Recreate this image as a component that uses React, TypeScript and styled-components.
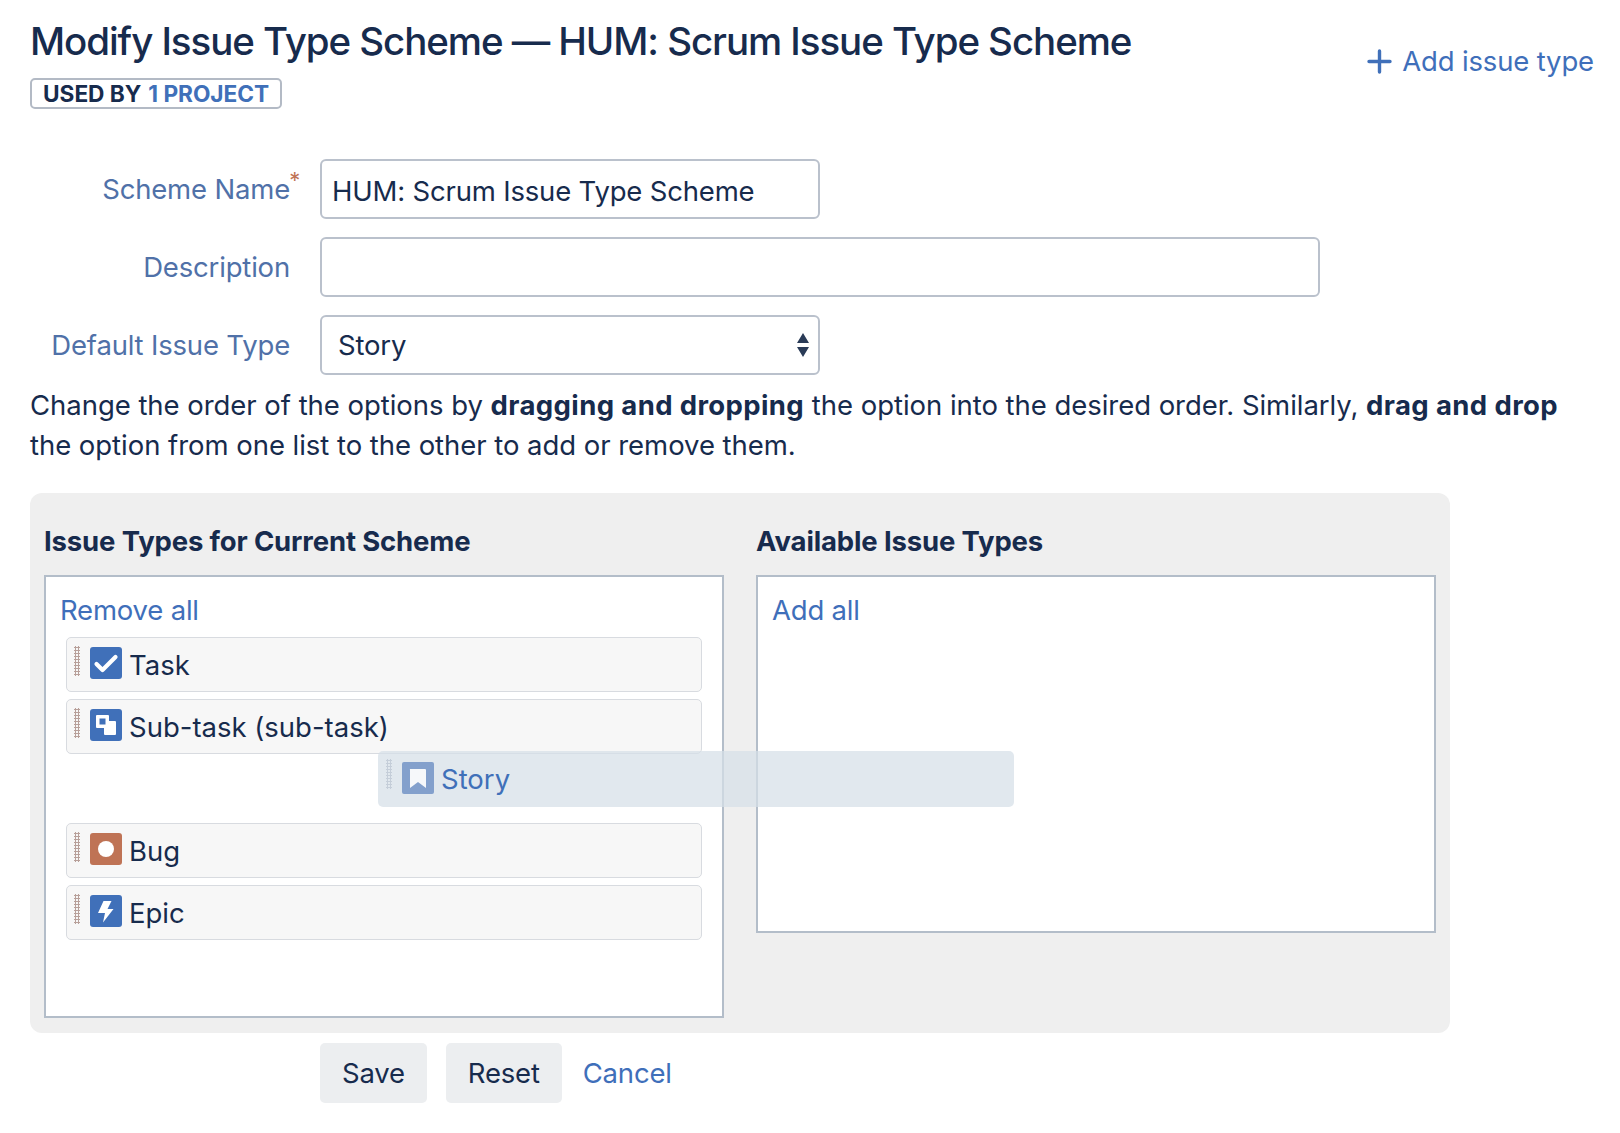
import {FC} from 'react';
import styled, {createGlobalStyle} from 'styled-components';

const GlobalStyle = createGlobalStyle`
  html, body {
    margin: 0;
    padding: 0;
    background: #fff;
  }
  body {
    font-family: Inter, "Liberation Sans", sans-serif;
    font-size: 27.5px;
    line-height: 40px;
    letter-spacing: -0.04px;
    color: #172b4d;
  }
`;

const Page = styled.div`
  width: 1620px;
  height: 1133px;
  box-sizing: border-box;
  padding: 0 30px;
  position: relative;
  overflow: hidden;
`;

const Header = styled.header`
  display: flex;
  justify-content: space-between;
  align-items: flex-start;
  padding-top: 17px;
`;

const Title = styled.h1`
  margin: 0;
  font-size: 38.5px;
  line-height: 48px;
  font-weight: 500;
  letter-spacing: -1.07px;
  color: #172b4d;
`;

const Badge = styled.div`
  display: inline-flex;
  align-items: center;
  gap: 7px;
  height: 31px;
  margin-top: 13px;
  padding: 0 11px;
  border: 2px solid #b3bac5;
  border-radius: 5px;
  font-size: 22.7px;
  font-weight: 700;
  line-height: 27px;
  color: #172b4d;
  box-sizing: border-box;
`;

const BadgeAccent = styled.span`
  color: #4070b9;
`;

const AddType = styled.a`
  display: flex;
  align-items: center;
  gap: 10px;
  margin: 24px -4px 0 0;
  letter-spacing: -0.15px;
  color: #3f6fba;
  white-space: nowrap;
`;

const Form = styled.form`
  display: grid;
  grid-template-columns: 260px 1fr;
  column-gap: 30px;
  row-gap: 18px;
  margin-top: 46.5px;
  letter-spacing: -0.18px;
`;

const Label = styled.label`
  text-align: right;
  line-height: 60px;
  color: #5071a8;
  position: relative;
`;

const Required = styled.span`
  position: absolute;
  right: -10px;
  top: -9px;
  color: #bf7355;
  font-size: 22px;
`;

const Field = styled.div<{$width: number}>`
  width: ${p => p.$width}px;
  height: 60px;
  box-sizing: border-box;
  display: flex;
  align-items: center;
  justify-content: space-between;
  padding: 4px 10px 0;
  border: 2px solid #bac1cc;
  border-radius: 6px;
  color: #172b4d;
`;

const SelectField = styled(Field)`
  padding: 0 8px 0 16px;
`;

const Help = styled.p`
  margin: 10px 0 0;
  width: 1570px;

  strong {
    font-weight: 700;
    letter-spacing: 0.38px;
  }
`;

const Panel = styled.section`
  display: grid;
  grid-template-columns: 680px 680px;
  column-gap: 32px;
  align-items: start;
  width: 1420px;
  height: 540px;
  box-sizing: border-box;
  margin-top: 28.5px;
  padding: 27px 14px 14px;
  background: #efefef;
  border-radius: 12px;
`;

const ColumnTitle = styled.h3`
  margin: 0 0 13px;
  font-size: 27.5px;
  line-height: 42px;
  font-weight: 700;
  letter-spacing: -0.15px;
`;

const List = styled.div<{$height: number}>`
  height: ${p => p.$height}px;
  box-sizing: border-box;
  padding: 13px 20px 0 14px;
  background: #fff;
  border: 2px solid #b3bdc9;
`;

const ListAction = styled.a`
  display: block;
  color: #3f6fba;
  line-height: 40px;
  margin-bottom: 7px;
  letter-spacing: -0.2px;
`;

const Item = styled.div`
  display: flex;
  align-items: center;
  height: 55px;
  box-sizing: border-box;
  margin: 0 0 7px 6px;
  padding: 0 7px;
  background: #f7f7f7;
  border: 1.5px solid #d8dbe0;
  border-radius: 5px;
`;

const Gap = styled.div`
  height: 62px;
`;

const Handle = styled.span<{$light?: boolean}>`
  flex: none;
  align-self: flex-start;
  width: 6px;
  height: 30px;
  margin-top: 8px;
  margin-right: 10px;
  background-image: radial-gradient(circle, ${p => (p.$light ? '#c5ced9' : '#b8a09a')} 1.2px, transparent 1.4px);
  background-size: 3px 3px;
`;

const IconBox = styled.span<{$dim?: boolean}>`
  flex: none;
  display: block;
  width: 32px;
  height: 32px;
  margin-top: -3px;
  margin-right: 7px;
  opacity: ${p => (p.$dim ? 0.72 : 1)};

  svg {
    display: block;
  }
`;

const ItemText = styled.span`
  color: #172b4d;
  letter-spacing: 0;
`;

const DragItem = styled.div`
  position: absolute;
  left: 378px;
  top: 751px;
  width: 636px;
  height: 56px;
  box-sizing: border-box;
  display: flex;
  align-items: center;
  padding: 0 8px;
  background: rgba(214, 223, 232, 0.72);
  border-radius: 5px;
`;

const DragText = styled.span`
  color: #4070b9;
  letter-spacing: 0;
`;

const Actions = styled.div`
  display: flex;
  align-items: center;
  margin: 10px 0 0 290px;
  letter-spacing: -0.2px;
`;

const Button = styled.button`
  height: 60px;
  padding: 0 22px;
  margin-right: 19px;
  border: none;
  border-radius: 5px;
  background: #eceef0;
  color: #172b4d;
  font: inherit;
  letter-spacing: inherit;
`;

const Cancel = styled.a`
  margin-left: 2px;
  color: #3f6fba;
`;

const TaskIcon: FC = () => (
  <svg width="32" height="32" viewBox="0 0 32 32">
    <rect width="32" height="32" rx="3" fill="#4070b9" />
    <path d="M6.5 17l6 6L25.5 10" fill="none" stroke="#fff" strokeWidth="4.2" strokeLinecap="round" strokeLinejoin="round" />
  </svg>
);

const SubtaskIcon: FC = () => (
  <svg width="32" height="32" viewBox="0 0 32 32">
    <rect width="32" height="32" rx="3" fill="#4070b9" />
    <path d="M7 6h11a1 1 0 0 1 1 1v5h6a1 1 0 0 1 1 1v12a1 1 0 0 1-1 1H15a1 1 0 0 1-1-1v-6H7a1 1 0 0 1-1-1V7a1 1 0 0 1 1-1z" fill="#fff" />
    <rect x="9.5" y="9.5" width="6" height="6" fill="#4070b9" />
  </svg>
);

const StoryIcon: FC = () => (
  <svg width="32" height="32" viewBox="0 0 32 32">
    <rect width="32" height="32" rx="2" fill="#5f85bf" />
    <path d="M8 7h15a1 1 0 0 1 1 1v18l-8-6-8 6V8a1 1 0 0 1 0-1z" fill="#fff" />
  </svg>
);

const BugIcon: FC = () => (
  <svg width="32" height="32" viewBox="0 0 32 32">
    <rect width="32" height="32" rx="3" fill="#bf7355" />
    <circle cx="16" cy="16" r="8" fill="#fff" />
  </svg>
);

const EpicIcon: FC = () => (
  <svg width="32" height="32" viewBox="0 0 32 32">
    <rect width="32" height="32" rx="3" fill="#4070b9" />
    <path d="M13.5 6h8l-4 8h6L13 27.5l2-9.5H8z" fill="#fff" />
  </svg>
);

const PlusIcon: FC = () => (
  <svg width="25" height="25" viewBox="0 0 25 25">
    <path d="M12.5 2v21M2 12.5h21" stroke="#4070b9" strokeWidth="3.4" strokeLinecap="round" />
  </svg>
);

const SelectArrows: FC = () => (
  <svg width="14" height="26" viewBox="0 0 14 26">
    <path d="M7 1l6 10H1zM7 25L1 15h12z" fill="#2a3b57" />
  </svg>
);

const currentTypes = [
  {name: 'Task', icon: <TaskIcon />},
  {name: 'Sub-task (sub-task)', icon: <SubtaskIcon />},
  {name: 'Bug', icon: <BugIcon />},
  {name: 'Epic', icon: <EpicIcon />},
];

const App: FC = () => (
  <Page>
    <GlobalStyle />
    <Header>
      <div>
        <Title>Modify Issue Type Scheme — HUM: Scrum Issue Type Scheme</Title>
        <Badge>
          USED BY <BadgeAccent>1 PROJECT</BadgeAccent>
        </Badge>
      </div>
      <AddType>
        <PlusIcon />
        Add issue type
      </AddType>
    </Header>

    <Form>
      <Label>
        Scheme Name<Required>*</Required>
      </Label>
      <Field $width={500}>HUM: Scrum Issue Type Scheme</Field>
      <Label>Description</Label>
      <Field $width={1000} />
      <Label>Default Issue Type</Label>
      <SelectField $width={500}>
        Story
        <SelectArrows />
      </SelectField>
    </Form>

    <Help>
      Change the order of the options by <strong>dragging and dropping</strong> the option into the desired order.
      Similarly, <strong>drag and drop</strong> the option from one list to the other to add or remove them.
    </Help>

    <Panel>
      <div>
        <ColumnTitle>Issue Types for Current Scheme</ColumnTitle>
        <List $height={443}>
          <ListAction>Remove all</ListAction>
          {currentTypes.map((type, i) => (
            <div key={type.name}>
              {i === 2 && <Gap />}
              <Item>
                <Handle />
                <IconBox>{type.icon}</IconBox>
                <ItemText>{type.name}</ItemText>
              </Item>
            </div>
          ))}
        </List>
      </div>
      <div>
        <ColumnTitle>Available Issue Types</ColumnTitle>
        <List $height={358}>
          <ListAction>Add all</ListAction>
        </List>
      </div>
    </Panel>

    <DragItem>
      <Handle $light />
      <IconBox $dim>
        <StoryIcon />
      </IconBox>
      <DragText>Story</DragText>
    </DragItem>

    <Actions>
      <Button>Save</Button>
      <Button>Reset</Button>
      <Cancel>Cancel</Cancel>
    </Actions>
  </Page>
);

export default App;
